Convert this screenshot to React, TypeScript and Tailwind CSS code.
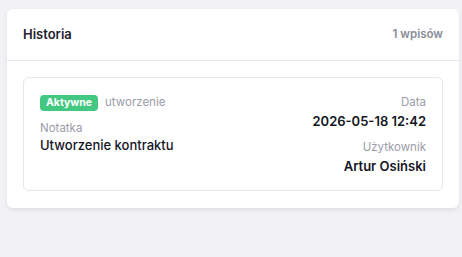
export default function App() {
  return (
    <div
      className="min-h-[257px] w-full bg-[#f2f1f6] pt-[9px] pl-[7px]"
      style={{ fontFamily: "Inter, 'Noto Sans', sans-serif" }}
    >
      <div className="w-[452px] rounded-md bg-white shadow-[0_2px_4px_rgba(0,0,0,0.08)]">
        {/* Header */}
        <div className="flex h-[52px] items-center justify-between border-b border-[#e8e8ee] px-4">
          <h2 className="text-[13px] font-semibold text-[#1f2230]">Historia</h2>
          <span className="text-[11.5px] font-semibold text-[#8a8c99]">1 wpisów</span>
        </div>

        {/* Entries */}
        <div className="px-4 pt-4 pb-[17px]">
          <div className="flex h-[114px] justify-between rounded-md border border-[#e6e6ec] px-4 pt-4">
            <div className="flex flex-col">
              <div className="flex h-[18px] items-center gap-[7px]">
                <span className="rounded-[4px] bg-[#42c880] px-[6px] text-[10.5px] leading-4 font-bold text-white">
                  Aktywne
                </span>
                <span className="text-[11.5px] text-[#9a9ca8]">utworzenie</span>
              </div>
              <span className="mt-[8px] text-[11.5px] leading-4 text-[#9a9ca8]">Notatka</span>
              <span className="text-[13px] leading-[18px] font-medium text-[#14161f]">
                Utworzenie kontraktu
              </span>
            </div>
            <div className="flex flex-col items-end">
              <span className="text-[11.5px] leading-4 text-[#9a9ca8]">Data</span>
              <span className="mt-[1px] text-[13px] leading-5 font-semibold text-[#14161f]">
                2026-05-18 12:42
              </span>
              <span className="mt-[8px] text-[11.5px] leading-4 text-[#9a9ca8]">Użytkownik</span>
              <span className="mt-[1px] text-[13px] leading-5 font-semibold text-[#14161f]">
                Artur Osiński
              </span>
            </div>
          </div>
        </div>
      </div>
    </div>
  )
}
